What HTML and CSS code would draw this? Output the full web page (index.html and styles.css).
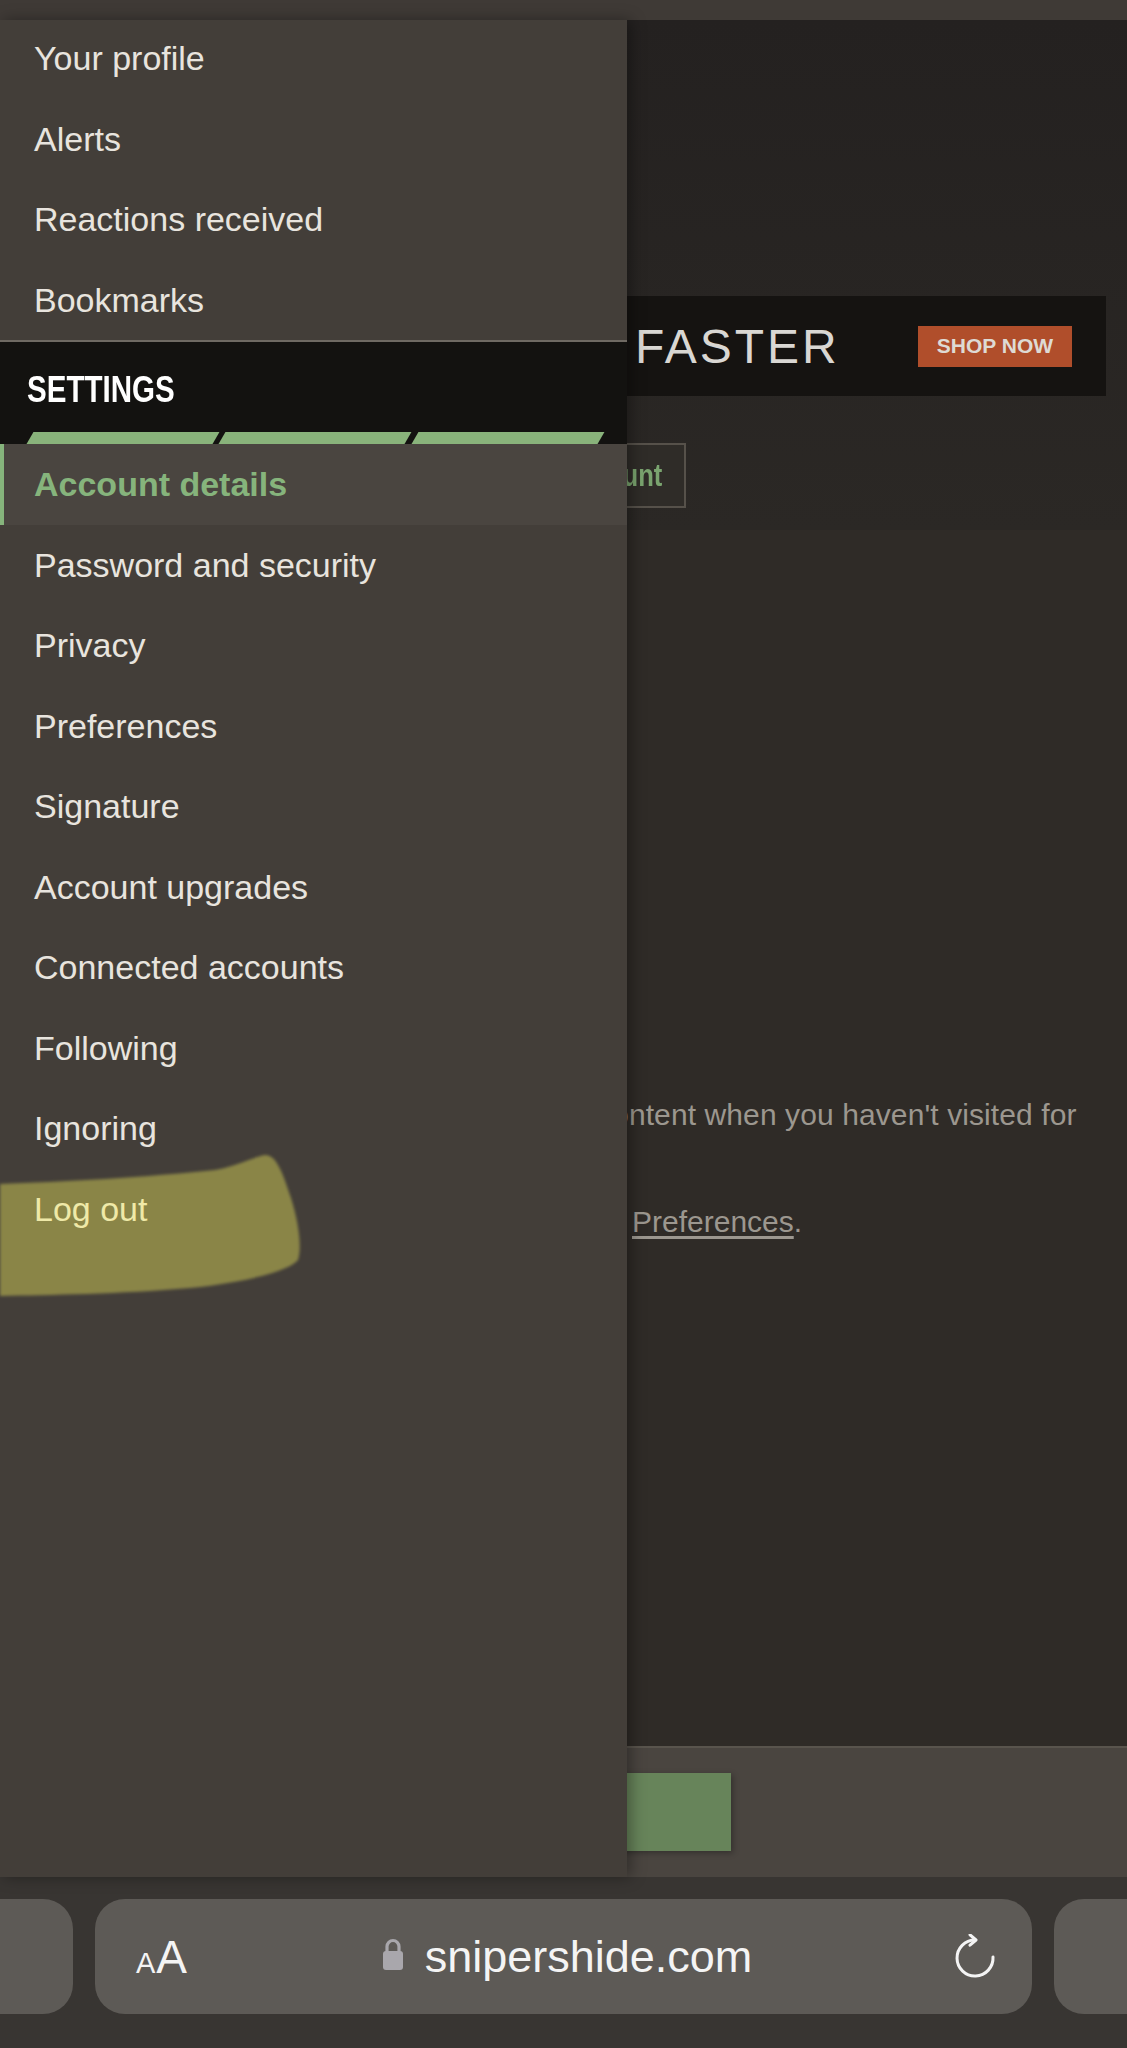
FILE: index.html
```html
<!DOCTYPE html>
<html lang="en">
<head>
    <meta charset="UTF-8">
    <meta name="viewport" content="width=device-width, initial-scale=1.0">
    <title>Account details | Sniper's Hide</title>
    <link rel="stylesheet" href="styles.css">
</head>
<body>
    <div class="screen">
        <div class="status-strip"></div>

        <main class="page">
            <header class="page-head">
                <div class="promo">
                    <span class="promo-title">FASTER</span>
                    <a class="promo-btn" href="#">SHOP NOW</a>
                </div>
                <div class="head-actions">
                    <a class="upgrade-btn" href="#"><span>Upgrade account</span></a>
                </div>
            </header>

            <section class="page-body">
                <div class="hint">
                    <p>content when you haven't visited for</p>
                    <p><a href="#">Preferences</a>.</p>
                </div>
            </section>

            <div class="form-foot">
                <button class="save-btn" type="button">Save</button>
            </div>
        </main>

        <div class="toolbar">
            <div class="tab-pill prev"></div>
            <div class="url-pill">
                <span class="aa"><span class="aa-small">A</span>A</span>
                <span class="address">
                    <svg class="lock" width="24" height="34" viewBox="0 0 24 34">
                        <path d="M6 15V9.5a6 6 0 0 1 12 0V15" fill="none" stroke="#a9a7ac" stroke-width="3.2"/>
                        <rect x="2" y="14" width="20" height="19" rx="3" fill="#a9a7ac"/>
                    </svg>
                    <span class="domain">snipershide.com</span>
                </span>
                <svg class="reload" width="44" height="46" viewBox="0 0 44 46">
                    <path d="M22 6A18 18 0 1 0 40 23" fill="none" stroke="#f4f4f4" stroke-width="3" stroke-linecap="round"/>
                    <path d="M17 0.8L23 6L17 11.2" fill="none" stroke="#f4f4f4" stroke-width="3" stroke-linecap="round" stroke-linejoin="round"/>
                </svg>
            </div>
            <div class="tab-pill next"></div>
        </div>

        <aside class="drawer">
            <!-- marker stroke behind "Log out" -->
            <svg class="marker" width="310" height="160" viewBox="0 0 310 160">
                <defs>
                    <filter id="soft"><feGaussianBlur stdDeviation="1.4"/></filter>
                </defs>
                <path d="M0 42C60 40 150 35 215 28C240 23 255 14 266 13C277 14 283 32 291 56C299 82 302 105 298 118C290 128 250 140 190 146C120 152 50 153 0 154Z" fill="#8a8547" filter="url(#soft)"/>
            </svg>

            <nav class="menu">
                <div class="menu-group">
                    <a class="menu-item" href="#">Your profile</a>
                    <a class="menu-item" href="#">Alerts</a>
                    <a class="menu-item" href="#">Reactions received</a>
                    <a class="menu-item" href="#">Bookmarks</a>
                </div>

                <div class="menu-head">
                    <h3>SETTINGS</h3>
                </div>
                <div class="menu-stripes">
                    <span></span>
                    <span></span>
                    <span></span>
                </div>

                <a class="menu-item active" href="#">Account details</a>
                <a class="menu-item" href="#">Password and security</a>
                <a class="menu-item" href="#">Privacy</a>
                <a class="menu-item" href="#">Preferences</a>
                <a class="menu-item" href="#">Signature</a>
                <a class="menu-item" href="#">Account upgrades</a>
                <a class="menu-item" href="#">Connected accounts</a>
                <a class="menu-item" href="#">Following</a>
                <a class="menu-item" href="#">Ignoring</a>
                <a class="menu-item logout" href="#">Log out</a>
            </nav>
        </aside>
    </div>
</body>
</html>
```

FILE: styles.css
```css
body {
    margin: 0;
    background-color: #383532;
    font-family: "Liberation Sans", Arial, sans-serif;
}

.screen {
    position: relative;
    width: 1127px;
    height: 2048px;
    overflow: hidden;
    display: flex;
    flex-direction: column;
}

.status-strip {
    height: 20px;
    background-color: #3f3a36;
}

/* page underneath the drawer */

.page {
    height: 1857px;
    display: flex;
    flex-direction: column;
}

.page-head {
    height: 510px;
    box-sizing: border-box;
    padding-top: 276px;
    background: linear-gradient(#242120, #2b2825);
}

.promo {
    margin: 0 21px 0 20px;
    height: 100px;
    box-sizing: border-box;
    padding: 0 34px 0 615px;
    background-color: #151311;
    display: flex;
    align-items: center;
}

.promo-title {
    font-size: 48px;
    letter-spacing: 3px;
    color: #d9d7d3;
}

.promo-btn {
    margin-left: auto;
    width: 154px;
    height: 41px;
    background-color: #b04e2b;
    color: #dedad4;
    font-size: 21px;
    font-weight: bold;
    text-decoration: none;
    display: flex;
    align-items: center;
    justify-content: center;
}

.head-actions {
    margin-top: 47px;
    padding-left: 20px;
}

.upgrade-btn {
    width: 666px;
    height: 65px;
    box-sizing: border-box;
    border: 2px solid #56514a;
    background-color: #2f2c28;
    color: #7aa46f;
    font-size: 32px;
    font-weight: bold;
    text-decoration: none;
    padding-right: 22px;
    display: flex;
    align-items: center;
    justify-content: flex-end;
}

/* condensed label */
.upgrade-btn span {
    transform: scaleX(0.8);
    transform-origin: right center;
}

.page-body {
    flex: 1;
    padding-top: 567px;
    box-sizing: border-box;
    background-color: #2f2b27;
}

.hint {
    margin-left: 597px;
    font-size: 30px;
    line-height: 36px;
    color: #9c978f;
    white-space: nowrap;
}

.hint p {
    margin: 0;
}

.hint p:first-child {
    letter-spacing: 0.1px;
}

.hint p + p {
    margin-top: 71px;
    padding-left: 35px;
}

.hint a {
    color: inherit;
    text-decoration: underline;
    text-underline-offset: 4px;
}

.form-foot {
    height: 131px;
    box-sizing: border-box;
    border-top: 2px solid #59544d;
    background-color: #4a4540;
    padding: 25px 0 0 400px;
}

.save-btn {
    display: block;
    width: 331px;
    height: 78px;
    border: none;
    background-color: #67845a;
    color: #fff;
    font-size: 30px;
    box-shadow: 2px 2px 6px rgba(0, 0, 0, 0.3);
}

/* browser toolbar */

.toolbar {
    flex: 1;
    display: flex;
    gap: 22px;
    padding-top: 22px;
    box-sizing: border-box;
    background-color: #383532;
}

.tab-pill {
    height: 115px;
    background-color: #5d5a56;
}

.tab-pill.prev {
    width: 73px;
    border-radius: 0 30px 30px 0;
}

.tab-pill.next {
    flex: 1;
    border-radius: 30px 0 0 30px;
}

.url-pill {
    width: 937px;
    height: 115px;
    box-sizing: border-box;
    padding: 0 35px 0 41px;
    border-radius: 30px;
    background-color: #5d5a56;
    color: #f4f4f4;
    display: grid;
    grid-template-columns: 1fr auto 1fr;
    align-items: center;
}

.aa {
    font-size: 46px;
    line-height: 1;
}

.aa-small {
    font-size: 29px;
    margin-right: 1px;
}

.address {
    display: flex;
    align-items: center;
    gap: 20px;
}

.lock {
    margin-top: -6px;
}

.domain {
    font-size: 45px;
}

.reload {
    justify-self: end;
}

/* slide-out account menu */

.drawer {
    position: absolute;
    top: 20px;
    left: 0;
    width: 627px;
    height: 1857px;
    background-color: #433e39;
    box-shadow: 4px 0 14px rgba(0, 0, 0, 0.35);
    z-index: 2;
}

.marker {
    position: absolute;
    top: 1122px;
    left: 0;
}

.menu-group {
    height: 320px;
}

.menu-group .menu-item {
    top: -2px;
}

.menu-item {
    position: relative;
    display: block;
    height: 80.5px;
    line-height: 80.5px;
    padding-left: 34px;
    font-size: 34px;
    color: #e8e4de;
    text-decoration: none;
}

.menu-item.active {
    padding-left: 30px;
    border-left: 4px solid #86b47c;
    background-color: #4a4540;
    color: #86b47c;
    font-weight: bold;
}

.menu-item.logout {
    color: #efe9a8;
}

.menu-head {
    height: 90px;
    border-top: 2px solid #6f6a63;
    background-color: #131210;
    padding-left: 27px;
    display: flex;
    align-items: center;
}

.menu-head h3 {
    margin: 6px 0 0 0;
    color: #fff;
    font-size: 36px;
    font-weight: bold;
    transform: scaleX(0.82);
    transform-origin: left center;
}

.menu-stripes {
    height: 12px;
    background-color: #131210;
    padding: 0 26px 0 30px;
    display: flex;
    gap: 6px;
}

.menu-stripes span {
    flex: 1;
    background-color: #89b37b;
    transform: skewX(-30deg);
}
```
